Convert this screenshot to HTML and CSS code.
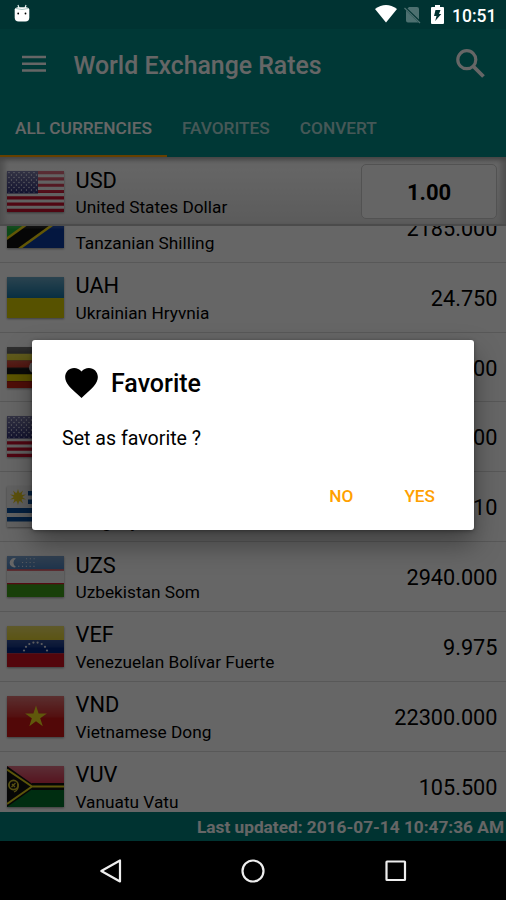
FILE: index.html
```html
<!DOCTYPE html>
<html lang="en">
<head>
<meta charset="utf-8">
<title>World Exchange Rates</title>
<link rel="stylesheet" href="styles.css">
</head>
<body>
<svg width="0" height="0" class="defs" aria-hidden="true">
  <defs>
    <linearGradient id="gloss" x1="0" y1="0" x2="0" y2="1">
      <stop offset="0" stop-color="#fff" stop-opacity=".42"/>
      <stop offset=".52" stop-color="#fff" stop-opacity=".08"/>
      <stop offset=".53" stop-color="#fff" stop-opacity="0"/>
    </linearGradient>
    <pattern id="stars" width="5" height="5" patternUnits="userSpaceOnUse">
      <circle cx="2" cy="1.6" r=".75" fill="#dde"/><circle cx="4.5" cy="4.1" r=".75" fill="#dde"/>
    </pattern>
    <symbol id="us" viewBox="0 0 57 41">
      <path fill="#f2f2f2" d="M0 0h57v41H0z"/>
      <path stroke="#c8102e" stroke-width="3.15" d="M0 1.6h57M0 7.9h57M0 14.2h57M0 20.5h57M0 26.8h57M0 33.1h57M0 39.4h57"/>
      <path fill="#24246e" d="M0 0h31v22.5H0z"/><path fill="url(#stars)" d="M1 1h29v20.5H1z"/>
    </symbol>
  </defs>
</svg>
<div class="screen">
  <header class="status">
    <svg class="droid" viewBox="0 0 16 19"><path d="M4 1l1 3M12 1l-1 3" stroke="#dfeceb" stroke-width="1.2"/><path d="M.7 5.5Q1 3.4 3.5 3.2h9q2.500.2 2.800 2.300v8q0 4-4 4H4.700q-4 0-4-4z" fill="#fff"/><path d="M2 4.500q6 2 12 0" fill="none" stroke="#a9c4c2"/><circle cx="4.200" cy="9.500" r=".9"/><circle cx="11.500" cy="9.500" r=".9"/></svg>
    <div class="status-right">
      <svg class="wifi" viewBox="0 0 22 18"><path d="M0 4Q11-4 22 4L11 17.500z" fill="#fff"/></svg>
      <svg class="sim" viewBox="0 0 17 18"><path d="M5 1h8q2 0 2 2v10.500L3.500 2.500zM2 4.500l12.500 12H4q-2 0-2-2z" fill="#4d7070"/><path d="M.5 2l15.500 15" stroke="#4d7070" stroke-width="1.300"/></svg>
      <svg class="battery" viewBox="0 0 13 19"><path d="M4 0h5v2h3q1 0 1 1v15q0 1-1 1H1q-1 0-1-1V3q0-1 1-1h3z" fill="#fff"/><path d="M4.500 5h5L8 9h2.300L4.200 16l1.300-5H3z" fill="#003332"/></svg>
      <span class="clock">10:51</span>
    </div>
  </header>
  <div class="toolbar">
    <svg class="menu" viewBox="0 0 24 18"><path d="M0 2h24M0 8.700h24M0 15.500h24" stroke="#fff" stroke-width="2.500"/></svg>
    <h1>World Exchange Rates</h1>
    <svg class="search" viewBox="0 0 29 29"><circle cx="10.800" cy="10.700" r="9" fill="none" stroke="#fff" stroke-width="3.200"/><path d="M17.500 17.500l10 10" stroke="#fff" stroke-width="3.800"/></svg>
  </div>
  <nav class="tabs"><span class="tab active">ALL CURRENCIES</span><span class="tab">FAVORITES</span><span class="tab">CONVERT</span></nav>
  <section class="base">
    <svg class="flag" viewBox="0 0 57 41"><use href="#us"/><path class="gloss" d="M0 0h57v41H0z"/></svg>
    <div class="names"><b>USD</b><span>United States Dollar</span></div>
    <div class="amount">1.00</div>
  </section>
  <main class="list">
    <div class="rows">
      <article class="row">
        <svg class="flag" viewBox="0 0 57 41"><path fill="#1eb53a" d="M0 0h57v41H0z"/><path fill="#0a3aa0" d="M57 0v41H0z"/><path stroke="#f5d80f" stroke-width="18" d="M-6 45.300L63-4.300"/><path stroke="#111" stroke-width="13" d="M-6 45.300L63-4.300"/><path class="gloss" d="M0 0h57v41H0z"/></svg>
        <div class="names"><b>TZS</b><span>Tanzanian Shilling</span></div><div class="rate">2185.000</div>
      </article>
      <article class="row">
        <svg class="flag" viewBox="0 0 57 41"><path fill="#00699c" d="M0 0h57v21H0z"/><path fill="#d9cc00" d="M0 21h57v20H0z"/><path class="gloss" d="M0 0h57v41H0z"/></svg>
        <div class="names"><b>UAH</b><span>Ukrainian Hryvnia</span></div><div class="rate">24.750</div>
      </article>
      <article class="row">
        <svg class="flag" viewBox="0 0 57 41"><path fill="#181818" d="M0 0h57v41H0z"/><path fill="#e8d500" d="M0 6.800h57v6.800H0zM0 27.300h57v6.800H0z"/><path fill="#c92514" d="M0 13.600h57v6.800H0zM0 34.200h57V41H0z"/><circle cx="28" cy="20.500" r="6" fill="#ddd"/><path class="gloss" d="M0 0h57v41H0z"/></svg>
        <div class="names"><b>UGX</b><span>Ugandan Shilling</span></div><div class="rate">3360.000</div>
      </article>
      <article class="row">
        <svg class="flag" viewBox="0 0 57 41"><use href="#us"/><path class="gloss" d="M0 0h57v41H0z"/></svg>
        <div class="names"><b>USD</b><span>United States Dollar</span></div><div class="rate">1.000</div>
      </article>
      <article class="row">
        <svg class="flag" viewBox="0 0 57 41"><path fill="#f2f2f2" d="M0 0h57v41H0z"/><path fill="#0a52a0" d="M21 5h36v4.500H21zM21 13.500h36V18H21zM0 22h57v5H0zM0 31h57v4.500H0z"/><path fill="#e8cd22" d="M11 3l1.400 4.500 3.600-3-1.700 4.400 4.700-.4-4 2.500 4 2.500-4.700-.4 1.700 4.400-3.600-3L11 19l-1.400-4.500-3.600 3 1.700-4.400-4.700.4 4-2.500-4-2.500 4.700.4L6 4.500l3.600 3z"/><circle cx="11" cy="11" r="4.500" fill="#e8cd22"/></svg>
        <div class="names"><b>UYU</b><span>Uruguayan Peso</span></div><div class="rate">30.010</div>
      </article>
      <article class="row">
        <svg class="flag" viewBox="0 0 57 41"><path fill="#f2f2f2" d="M0 0h57v41H0z"/><path fill="#1f62ae" d="M0 0h57v13.500H0z"/><path fill="#3e9d18" d="M0 28h57v13H0z"/><path stroke="#d51b2b" stroke-width="1.300" d="M0 14h57M0 27.600h57"/><path fill="#fff" d="M9 2.500a4.600 4.600 0 1 0 0 8.500 4.800 4.800 0 0 1 0-8.500z"/><path stroke="#c8d8ea" stroke-width="1.100" stroke-dasharray="1.100 2.700" d="M19 2.800h9M15 6.500h13M11.200 10.400h17"/><path class="gloss" d="M0 0h57v41H0z"/></svg>
        <div class="names"><b>UZS</b><span>Uzbekistan Som</span></div><div class="rate">2940.000</div>
      </article>
      <article class="row">
        <svg class="flag" viewBox="0 0 57 41"><path fill="#e0c900" d="M0 0h57v14H0z"/><path fill="#00247d" d="M0 14h57v13.500H0z"/><path fill="#cf1020" d="M0 27.300h57V41H0z"/><g fill="#e8e8f0"><circle cx="17" cy="24.500" r="1.100"/><circle cx="19" cy="20.800" r="1.100"/><circle cx="22.300" cy="18" r="1.100"/><circle cx="26.400" cy="16.600" r="1.100"/><circle cx="30.600" cy="16.600" r="1.100"/><circle cx="34.700" cy="18" r="1.100"/><circle cx="38" cy="20.800" r="1.100"/><circle cx="40" cy="24.500" r="1.100"/></g><path class="gloss" d="M0 0h57v41H0z"/></svg>
        <div class="names"><b>VEF</b><span>Venezuelan Bolívar Fuerte</span></div><div class="rate">9.975</div>
      </article>
      <article class="row">
        <svg class="flag" viewBox="0 0 57 41"><path fill="#cc1414" d="M0 0h57v41H0z"/><path class="gloss" d="M0 0h57v41H0z"/><path fill="#f0dc1c" d="M29 9.500l2.600 7.900h8.300l-6.700 4.900 2.600 7.900-6.800-4.900-6.700 4.900 2.500-7.900-6.700-4.900h8.300z"/></svg>
        <div class="names"><b>VND</b><span>Vietnamese Dong</span></div><div class="rate">22300.000</div>
      </article>
      <article class="row">
        <svg class="flag" viewBox="0 0 57 41"><path fill="#cf1030" d="M0 0h57v20H0z"/><path fill="#00702c" d="M0 20h57v21H0z"/><path class="gloss" d="M0 0h57v41H0z"/><path stroke="#111" stroke-width="7" d="M25 20.500h32"/><path d="M0 0l29 20.500L0 41z" fill="#111"/><path d="M0 3.500l25 17L0 38M25 20.500h32" fill="none" stroke="#e5d51a" stroke-width="1.900"/><circle cx="6.500" cy="19" r="4.600" fill="none" stroke="#d5c52a" stroke-width="1.700"/><path d="M11 18q1 6-4 8M4.500 21l4-4M5 18l3 3" fill="none" stroke="#d5c52a" stroke-width="1.300"/></svg>
        <div class="names"><b>VUV</b><span>Vanuatu Vatu</span></div><div class="rate">105.500</div>
      </article>
    </div>
  </main>
  <footer class="updated">Last updated: 2016-07-14 10:47:36 AM</footer>
  <nav class="navbar">
    <svg viewBox="0 0 24 24"><path d="M21 1.500v21L2.300 12z"/></svg>
    <svg viewBox="0 0 24 24"><circle cx="12" cy="12" r="10.500"/></svg>
    <svg viewBox="0 0 24 24"><rect x="2.500" y="2.500" width="18.500" height="18.500" rx=".5"/></svg>
  </nav>
  <div class="scrim">
    <section class="dialog" role="dialog">
      <div class="dialog-title"><svg viewBox="2 3 20 18.350"><path d="M12 21.350l-1.450-1.320C5.400 15.360 2 12.280 2 8.500 2 5.420 4.420 3 7.500 3c1.740 0 3.410.81 4.500 2.090C13.090 3.810 14.760 3 16.500 3 19.580 3 22 5.420 22 8.500c0 3.780-3.400 6.860-8.550 11.540L12 21.350z"/></svg><h2>Favorite</h2></div>
      <p>Set as favorite ?</p>
      <div class="actions"><button>NO</button><button>YES</button></div>
    </section>
  </div>
</div>
</body>
</html>
```
FILE: styles.css
```css
* { box-sizing: border-box; }
body { margin: 0; font-family: Roboto, "Liberation Sans", sans-serif; color: #000; }
svg { display: block; flex: none; }
.defs { position: absolute; }
.screen { position: relative; width: 506px; height: 900px; display: flex; flex-direction: column; overflow: hidden; background: #fff; }

.status { height: 29px; flex: none; background: #003332; display: flex; justify-content: space-between; padding: 0 10.500px 0 14px; position: relative; z-index: 2; }
.droid { width: 16px; height: 19px; margin-top: 4px; }
.status-right { display: flex; align-items: flex-start; }
.wifi { width: 22px; height: 18px; margin: 5px 7px 0 0; }
.sim { width: 17px; height: 18px; margin: 6px 10px 0 0; }
.battery { width: 13px; height: 19px; margin: 5px 8px 0 0; }
.clock { width: 43.500px; color: #fff; font-size: 17.500px; font-weight: 500; line-height: 32px; text-align: right; }

.toolbar { height: 72px; flex: none; background: #008c87; display: flex; align-items: center; padding: 0 21px 0 22px; }
.menu { width: 24px; height: 18px; margin-top: -2px; }
.toolbar h1 { flex: 1; margin: 2px 0 0 27.500px; color: #fff; font-size: 24.850px; font-weight: 500; line-height: 70px; }
.search { width: 29px; height: 29px; margin-top: -4px; }
.tabs { height: 56px; flex: none; background: #008c87; display: flex; }
.tab { padding: 0 15px; line-height: 55px; font-size: 17.250px; font-weight: 500; color: rgba(255,255,255,.7); }
.tab.active { color: #fff; border-bottom: 2.500px solid #ffa000; }

.base { height: 69px; flex: none; display: flex; align-items: flex-start; padding: 14px 9px 0 7px; background: linear-gradient(#f8f8f8, #fcfcfc 20%, #e4e4e4); border-bottom: 2px solid #bbb; box-shadow: inset 0 5px 4px -2px #aaa, inset 7px 0 5px -2px #ccc, inset -7px 0 5px -2px #ccc; }
.flag { width: 57px; height: 41px; box-shadow: 0 1px 2px rgba(0,0,0,.4); }
.gloss { fill: url(#gloss); }
.names { flex: 1; padding-left: 11.500px; }
.names b, .names span { display: block; white-space: nowrap; }
.names b { font-size: 21.800px; font-weight: 400; line-height: 26px; margin-top: -3.500px; }
.names span { font-size: 17.250px; line-height: 20px; margin-top: 3.700px; }
.amount { width: 136px; height: 55px; margin-top: -7px; border: 1.500px solid #ccc; border-radius: 5px; background: #fdfdfd; text-align: center; font-size: 22px; font-weight: 700; line-height: 55px; }

.list { height: 586px; flex: none; overflow: hidden; }
.rows { margin-top: -33.200px; }
.row { height: 69.850px; display: flex; align-items: flex-start; padding: 14px 8.500px 0 7px; border-bottom: 1.500px solid #ddd; }
.rate { font-size: 21.700px; line-height: 26px; margin-top: 9px; }

.updated { height: 29px; flex: none; background: #007f7c; color: #fff; font-size: 17.250px; font-weight: 700; line-height: 31px; text-align: right; padding-right: 2px; white-space: nowrap; }
.navbar { height: 59px; flex: none; background: #000; display: flex; justify-content: space-between; padding: 18px 98.500px 0 98.500px; position: relative; z-index: 2; }
.navbar svg { width: 24px; height: 24px; fill: none; stroke: #eee; stroke-width: 2.200; stroke-linejoin: round; }

.scrim { position: absolute; inset: 0; z-index: 1; padding: 340px 32px 0; background: rgba(0,0,0,.6); }
.dialog { width: 442px; height: 190px; background: #fff; border-radius: 3px; padding: 26px 30px 0; box-shadow: 0 14px 28px rgba(0,0,0,.38), 0 1px 4px rgba(0,0,0,.35); }
.dialog-title { display: flex; align-items: center; height: 33px; padding-left: 3px; }
.dialog-title svg { width: 33px; height: 30px; }
.dialog h2 { margin: 1px 0 0 13px; font-size: 25px; font-weight: 500; line-height: 33px; }
.dialog p { margin: 27px 0 0; font-size: 19.600px; line-height: 26px; }
.actions { display: flex; justify-content: flex-end; margin-top: 31px; padding-right: 9px; gap: 51px; }
.actions button { border: 0; padding: 0; background: none; font: 500 17.200px/26px Roboto, sans-serif; color: #ffa000; }
```
